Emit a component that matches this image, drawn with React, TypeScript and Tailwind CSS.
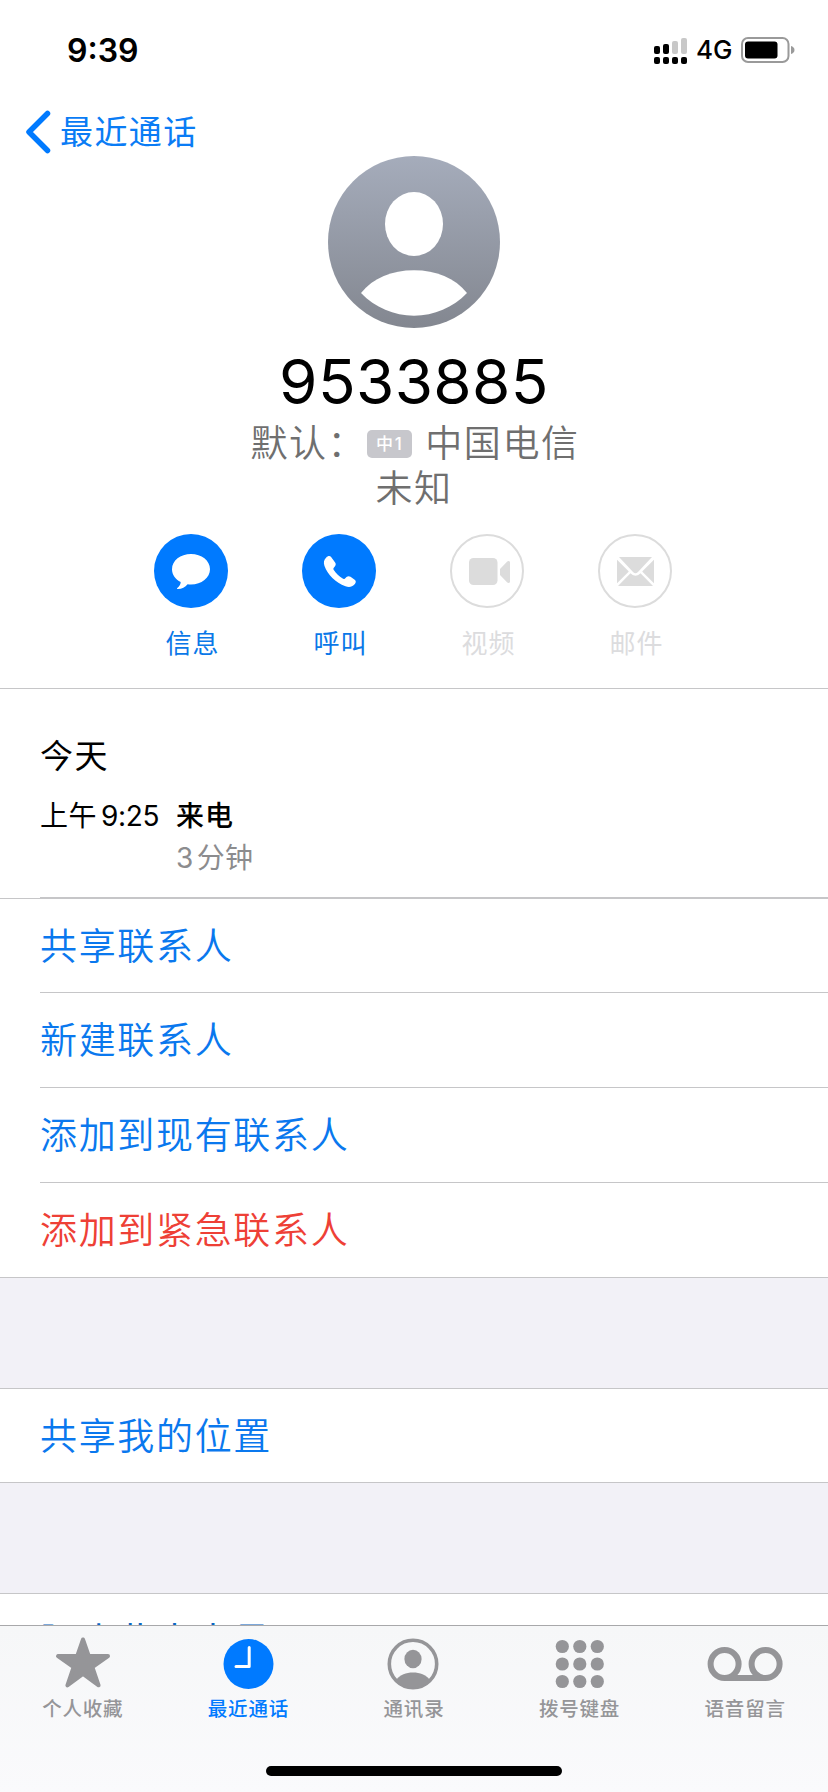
import React from 'react';

const actions = [
  {
    label: "信息",
    enabled: true,
    icon: (
      <svg className="w-[74px] h-[74px]" viewBox="0 0 74 74" fill="currentColor">
        <path d="M37 20C26.500 20 18 26.600 18 35.200c0 5.600 3.500 10.200 8.700 12.900 0 2.300-1.400 4.300-3.400 5.900-.6.500-.2 1.200.6 1.100 4-.3 7.300-2 9.700-4.900 1.100.2 2.200.2 3.400.2 10.500 0 19-6.600 19-15.200S47.500 20 37 20z" />
      </svg>
    )
  },
  {
    label: "呼叫",
    enabled: true,
    icon: (
      <svg className="w-[74px] h-[74px]" viewBox="0 0 74 74" fill="currentColor">
        <path d="M24.300 23.600c1.500-1.700 3.600-2.100 5-.4l3.800 5.300c1 1.400.8 2.700-.3 4l-1 1.300c-.6.800-.5 1.500 0 2.300 2.300 3.500 5.300 6.400 8.900 8.500.8.500 1.600.4 2.300-.2l1.500-1.300c1.200-1 2.600-1.200 4-.3l4.200 2.900c1.700 1.300 1.300 3.200-.3 4.900-2.200 2.400-5.400 3-8.900 1.700C33.500 48.500 25.600 40.600 22.500 32c-1.200-3.300-.6-6.300 1.800-8.400z" />
      </svg>
    )
  },
  {
    label: "视频",
    enabled: false,
    icon: (
      <svg className="w-[74px] h-[74px]" viewBox="0 0 74 74" fill="currentColor">
        <circle cx="37" cy="37" r="36" fill="none" stroke="currentColor" strokeWidth={2} />
        <rect x="19" y="24" width="28.500" height="27" rx="4.500" />
        <path d="M50 35l7-7.200c1.100-1.200 3-.8 3 .8v18.800c0 1.600-1.900 2-3 .8l-7-7.200z" />
      </svg>
    )
  },
  {
    label: "邮件",
    enabled: false,
    icon: (
      <svg className="w-[74px] h-[74px]" viewBox="0 0 74 74" fill="currentColor">
        <circle cx="37" cy="37" r="36" fill="none" stroke="currentColor" strokeWidth={2} />
        <path d="M21 23h33L39.700 38.300c-1.400 1.400-3 1.400-4.400 0z" />
        <path d="M19 25.800l11.800 11.700L19 49.200zM56 25.800v23.400L44.200 37.500z" />
        <path d="M32.500 39.200l.9.900c2.400 2.300 5.800 2.300 8.200 0l.9-.9L55 52H20z" />
      </svg>
    )
  }
];

const rows = [
  { label: "共享联系人", color: "text-[#0a78ee]" },
  { label: "新建联系人", color: "text-[#0a78ee]" },
  { label: "添加到现有联系人", color: "text-[#0a78ee]" },
  { label: "添加到紧急联系人", color: "text-[#ee4036]" }
];

const tabs = [
  {
    label: "个人收藏",
    active: false,
    icon: (
      <svg className="w-[56px] h-[56px]" viewBox="0 0 56 56" fill="currentColor" stroke="currentColor" strokeWidth={4} strokeLinejoin="round">
        <path d="M28 5.500l5.800 16.600 19.200 0-15.600 11 6.200 18.200L28 40 12.400 51.300l6.200-18.200L3 22.100l19.200 0z" />
      </svg>
    )
  },
  {
    label: "最近通话",
    active: true,
    icon: (
      <svg className="w-[56px] h-[56px]" viewBox="0 0 56 56" fill="none">
        <circle cx="28.500" cy="30" r="25" fill="currentColor" />
        <path d="M29.200 13.500v19H16" stroke="white" strokeWidth={3} strokeLinecap="round" strokeLinejoin="round" />
      </svg>
    )
  },
  {
    label: "通讯录",
    active: false,
    icon: (
      <svg className="w-[56px] h-[56px]" viewBox="0 0 56 56" fill="none">
        <circle cx="27" cy="30" r="23.700" stroke="currentColor" strokeWidth={3.6} />
        <ellipse cx="27" cy="25" rx="8.600" ry="9.300" fill="currentColor" />
        <path d="M10.500 45.500c3.500-4.300 9.500-6.900 16.500-6.900S40 41.200 43.500 45.500c-4 5-10 7.800-16.500 7.800S14.500 50.500 10.500 45.500z" fill="currentColor" />
      </svg>
    )
  },
  {
    label: "拨号键盘",
    active: false,
    icon: (
      <svg className="w-[56px] h-[56px]" viewBox="0 0 56 56" fill="currentColor">
        {[12.500, 30, 47.500].map((cy) =>
          [10.300, 27.800, 45.300].map((cx) => <circle key={`${cx}-${cy}`} cx={cx} cy={cy} r="6.600" />)
        )}
      </svg>
    )
  },
  {
    label: "语音留言",
    active: false,
    icon: (
      <svg className="w-[80px] h-[56px]" viewBox="0 0 80 56" fill="none" stroke="currentColor" strokeWidth={6}>
        <circle cx="19.600" cy="30" r="14" />
        <circle cx="60.600" cy="30" r="14" />
        <path d="M19.600 44h41" />
      </svg>
    )
  }
];

function StatusBar() {
  return (
    <div className="h-[100px] shrink-0 flex items-start justify-between pl-[67px] pr-[33px] pt-[33px]">
      <span className="pt-px text-[32px] leading-[34px] font-semibold">9:39</span>
      <div className="flex items-center h-[34px]">
        <svg className="w-[35px] h-[28px]" viewBox="0 0 35 28" fill="black">
          <rect x="1" y="10" width="6" height="8" rx="2" />
          <rect x="10" y="8" width="6" height="10" rx="2" />
          <rect x="19" y="5" width="6" height="13" rx="2" fill="#c8c8c8" />
          <rect x="28" y="2" width="6" height="16" rx="2" fill="#c8c8c8" />
          <rect x="1" y="21" width="6" height="7" rx="2" />
          <rect x="10" y="21" width="6" height="7" rx="2" />
          <rect x="19" y="21" width="6" height="7" rx="2" />
          <rect x="28" y="21" width="6" height="7" rx="2" />
        </svg>
        <span className="ml-2 w-[38px] text-[26px] leading-[34px] font-medium">4G</span>
        <svg className="ml-[7px] w-[54px] h-[26px]" viewBox="0 0 54 26" fill="none">
          <rect x="1" y="1" width="46.500" height="24" rx="6" stroke="#9a9a9a" strokeWidth={2} />
          <rect x="4" y="4.500" width="32.500" height="17" rx="3" fill="black" />
          <path d="M50 9c2 .5 3.500 2 3.500 4s-1.500 3.500-3.500 4z" fill="#9a9a9a" />
        </svg>
      </div>
    </div>
  );
}

function ContactHeader() {
  return (
    <div className="h-[532px] shrink-0 flex flex-col items-center">
      <svg className="w-[172px] h-[172px]" viewBox="0 0 172 172">
        <defs>
          <linearGradient id="avatar" x1="0" y1="0" x2="0" y2="1">
            <stop offset="0" stopColor="#a5acbb" />
            <stop offset="1" stopColor="#838790" />
          </linearGradient>
        </defs>
        <circle cx="86" cy="86" r="86" fill="url(#avatar)" />
        <ellipse cx="86" cy="68" rx="29" ry="32" fill="white" />
        <path d="M33 137C45 122 64 114.300 86 114.300S127 122 139 137C125 151.500 106 159.700 86 159.700S47 151.500 33 137z" fill="white" />
      </svg>
      <h1 className="mt-4 text-[62px] leading-[76px] tracking-[0.4px]">9533885</h1>
      <div className="flex items-center h-[46px] pl-0.5 pt-px text-[37px] tracking-[1.6px] text-[#6f6f6f] font-[350]">
        <span>默认：</span>
        <span className="ml-px w-[45px] h-7 rounded-[5px] bg-[#c7c7cc] text-white text-[17px] leading-7 text-center font-medium">中1</span>
        <span className="ml-[13px]">中国电信</span>
      </div>
      <div className="h-[46px] leading-[46px] text-[37px] tracking-[1.6px] text-[#6f6f6f] font-[350]">未知</div>
      <div className="mt-[22px] mr-0.5 flex gap-[74px]">
        {actions.map((action) => (
          <div key={action.label} className="flex flex-col items-center w-[74px]">
            <div className={action.enabled ? "rounded-full bg-[#007aff] text-white" : "rounded-full text-[#dcdcdc]"}>
              {action.icon}
            </div>
            <span className={`mt-[17px] pl-[3px] text-[26px] leading-[38px] tracking-[1px] whitespace-nowrap ${action.enabled ? "text-[#0a78e8]" : "text-[#dcdcde]"}`}>
              {action.label}
            </span>
          </div>
        ))}
      </div>
    </div>
  );
}

function RecentCall() {
  return (
    <div className="h-[211px] shrink-0 border-t border-[#c6c6c8] flex flex-col">
      <div className="flex-1 pl-10 pt-[45px]">
        <h2 className="text-[33px] leading-[44px] tracking-[1.6px]">今天</h2>
        <div className="mt-[17px] flex text-[28px] leading-[42px]">
          <div className="w-[136px] whitespace-nowrap">
            <span className="tracking-[0.5px]">上午</span>
            <span className="ml-1 tracking-[-0.3px]">9:25</span>
          </div>
          <div className="flex flex-col">
            <span className="font-medium tracking-[1px]">来电</span>
            <span className="text-[#8c8c8e] tracking-[0.4px]">
              3<span className="ml-[3px]">分钟</span>
            </span>
          </div>
        </div>
      </div>
      <div className="ml-10 h-px bg-[#c6c6c8]" />
      <div className="h-px bg-[#c6c6c8]" />
    </div>
  );
}

function TabBar() {
  return (
    <nav className="h-[167px] shrink-0 border-t border-[#a8a8aa] bg-linear-to-b from-[#f6f7f8] to-[#fafafc] flex flex-col items-center">
      <div className="flex w-full h-[140px]">
        {tabs.map((tab) => (
          <div key={tab.label} className={`flex-1 flex flex-col items-center pt-2 ${tab.active ? "text-[#007aff]" : "text-[#959598]"}`}>
            {tab.icon}
            <span className="mt-[5px] text-[19.500px] leading-[28px] tracking-[0.8px] font-medium">{tab.label}</span>
          </div>
        ))}
      </div>
      <div className="w-[296px] h-[10px] rounded-full bg-black" />
    </nav>
  );
}

export default function App() {
  return (
    <div lang="zh-CN" className="w-[828px] h-[1792px] bg-white text-black overflow-hidden flex flex-col font-['Inter','Noto_Sans_CJK_SC',sans-serif]">
      <div className="flex-1 min-h-0 overflow-hidden flex flex-col">
        <StatusBar />
        <button className="h-14 shrink-0 flex items-center pl-[25px] pt-2 text-[#0a7cf5]">
          <svg className="w-[26px] h-[44px]" viewBox="0 0 26 44" fill="none">
            <path d="M22.500 3.500L4 22l18.500 18.500" stroke="#007aff" strokeWidth={5.5} strokeLinecap="round" strokeLinejoin="round" />
          </svg>
          <span className="ml-[9px] text-[33px] leading-[44px] tracking-[1.4px]">最近通话</span>
        </button>
        <ContactHeader />
        <RecentCall />
        <ul className="shrink-0 border-b border-[#c6c6c8]">
          {rows.map((row, idx) => (
            <li key={row.label} className={`ml-10 text-[37px] tracking-[1.67px] leading-[96px] font-[350] ${idx > 0 ? "h-[95px] border-t border-[#c6c6c8]" : "h-[93px]"} ${row.color}`}>
              {row.label}
            </li>
          ))}
        </ul>
        <div className="h-[110px] shrink-0 bg-[#f2f1f7]" />
        <div className="h-[95px] shrink-0 border-y border-[#c6c6c8] pl-10 text-[37px] tracking-[1.67px] leading-[95px] font-[350] text-[#0a78ee]">共享我的位置</div>
        <div className="h-[110px] shrink-0 bg-[#f2f1f7]" />
        <div className="h-[95px] shrink-0 border-y border-[#c6c6c8] pl-10 text-[37px] tracking-[1.67px] leading-[95px] text-[#0a66c2]">阻止此来电号码</div>
      </div>
      <TabBar />
    </div>
  );
}
